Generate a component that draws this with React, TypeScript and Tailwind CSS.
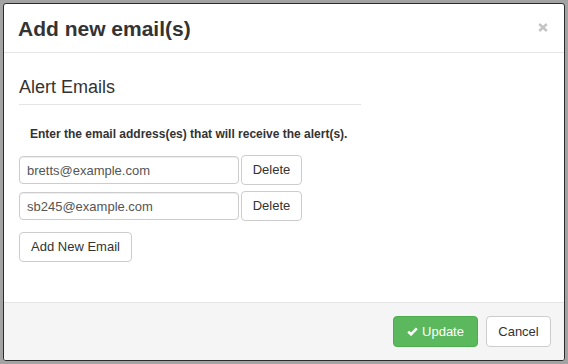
import { useState } from "react";

const font = { fontFamily: '"Liberation Sans", Arial, sans-serif' };

export default function App() {
  const [emails, setEmails] = useState(["bretts@example.com", "sb245@example.com"]);

  return (
    <div className="w-[568px] h-[364px] bg-[#a3a3a3] p-[3px]" style={font}>
      <div className="flex flex-col h-full bg-white border border-[#2b2b2b] rounded-[3px] overflow-hidden text-[#333]">
        {/* Header */}
        <div className="flex items-center justify-between h-[49px] border-b border-[#e5e5e5] pl-[14px] pr-[16px] pt-[1px]">
          <h4 className="text-[21px] leading-[24px] font-bold">Add new email(s)</h4>
          <button className="mb-[2px]">
            <svg width="10" height="9" viewBox="0 0 10 9">
              <path d="M1.2 1 L8.8 8 M8.8 1 L1.2 8" stroke="#c4c4c4" strokeWidth="2.4" strokeLinecap="butt" />
            </svg>
          </button>
        </div>

        {/* Body */}
        <div className="flex-1 px-[15px] pt-[24px]">
          <div className="w-[342px] border-b border-[#e5e5e5] pb-[7px]">
            <h3 className="text-[18px] leading-[20px]">Alert Emails</h3>
          </div>
          <p className="mt-[21px] ml-[11px] text-[12px] leading-[17px] font-bold">
            Enter the email address(es) that will receive the alert(s).
          </p>
          <div className="mt-[12px] flex flex-col gap-[6px]">
            {emails.map((email, idx) => (
              <div key={idx} className="flex items-center gap-[2px]">
                <input
                  value={email}
                  onChange={(e) => setEmails(emails.map((v, i) => (i === idx ? e.target.value : v)))}
                  className="w-[220px] h-[28px] border border-[#ccc] rounded-[4px] px-[7px] text-[13px] text-[#555] shadow-[inset_0_1px_1px_rgba(0,0,0,0.075)] outline-none"
                  style={font}
                />
                <button
                  onClick={() => setEmails(emails.filter((_, i) => i !== idx))}
                  className="w-[61px] h-[30px] border border-[#ccc] rounded-[4px] bg-white text-[13px] text-[#333]"
                >
                  Delete
                </button>
              </div>
            ))}
          </div>
          <button
            onClick={() => setEmails([...emails, ""])}
            className="mt-[11px] w-[113px] h-[30px] border border-[#ccc] rounded-[4px] bg-white text-[13px] text-[#333]"
          >
            Add New Email
          </button>
        </div>

        {/* Footer */}
        <div className="flex items-center justify-end gap-[8px] h-[58px] border-t border-[#e5e5e5] bg-[#f5f5f5] pr-[13px]">
          <button className="flex items-center justify-center gap-[4px] w-[85px] h-[31px] rounded-[4px] border border-[#4cae4c] bg-[#5cb85c] text-white text-[13px]">
            <svg width="11" height="9" viewBox="0 0 11 9">
              <path d="M1.2 4.6 L4 7.3 L9.8 1.4" fill="none" stroke="#fff" strokeWidth="2.6" />
            </svg>
            Update
          </button>
          <button className="w-[65px] h-[31px] rounded-[4px] border border-[#ccc] bg-white text-[13px] text-[#333]">
            Cancel
          </button>
        </div>
      </div>
    </div>
  );
}
